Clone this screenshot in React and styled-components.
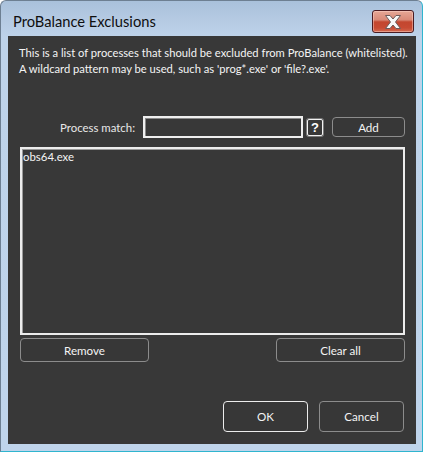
import React from "react";
import styled, { createGlobalStyle } from "styled-components";

const Global = createGlobalStyle`
  html, body { margin: 0; padding: 0; background: #ffffff; }
  body { font-family: Lato, "Noto Sans", sans-serif; }
  * { box-sizing: border-box; }
`;

const Window = styled.div`
  width: 423px;
  height: 452px;
  display: flex;
  flex-direction: column;
  border-style: solid;
  border-width: 1px;
  border-color: #6d7f92 #2fb5cf #2fb5cf #6d7f92;
  border-radius: 6px 6px 0 0;
  background: linear-gradient(180deg, #a9c1db 0px, #b6cbe3 20px, #bed3ea 36px, #bfd4eb 100%);
  overflow: hidden;
`;

const TitleBar = styled.div`
  height: 35px;
  display: flex;
  align-items: flex-start;
  justify-content: space-between;
  padding: 8px 8px 0 12px;
`;

const Title = styled.div`
  font-family: Lato, sans-serif;
  font-size: 14.7px;
  line-height: 24px;
  color: #0f0f0f;
`;

const CloseButton = styled.div`
  width: 42px;
  height: 23px;
  margin-top: 1px;
  border: 1px solid #4a1c22;
  border-radius: 3px;
  background: linear-gradient(180deg, #e6a796 0%, #d98a78 42%, #c3462f 52%, #c74a33 80%, #d46a50 100%);
  box-shadow: inset 0 0 0 1px rgba(255, 220, 210, 0.45);
  display: flex;
  align-items: center;
  justify-content: center;
`;

const Panel = styled.div`
  margin: 0 6px 6px 7px;
  height: 408px;
  background: #383838;
  display: flex;
  flex-direction: column;
  padding: 0 11px 0 12px;
  color: #f2f2f2;
  font-family: Lato, sans-serif;
  font-size: 11.4px;
`;

const Description = styled.p`
  margin: 9px 0 0 -1px;
  line-height: 16px;
  font-size: 11.2px;
  color: #f4f4f4;
  white-space: nowrap;
`;

const MatchRow = styled.div`
  margin-top: 39px;
  height: 22px;
  display: flex;
  align-items: center;
`;

const Label = styled.label`
  flex: 1;
  text-align: right;
  margin-right: 8px;
  color: #e8e8e8;
`;

const TextInput = styled.div`
  width: 160px;
  height: 22px;
  border: 2px solid #efefef;
  box-shadow: inset 1px 1px 0 #8a8a8a;
  background: #383838;
`;

const HelpButton = styled.div`
  width: 16px;
  height: 17px;
  margin-left: 4px;
  border: 1px solid #f2f2f2;
  border-radius: 2px;
  box-shadow: 0 0 0 1px #7a7a7a;
  display: flex;
  align-items: center;
  justify-content: center;
  font-family: "Liberation Sans", Arial, sans-serif;
  font-weight: 700;
  font-size: 13px;
  color: #ffffff;
`;

const Button = styled.div`
  width: ${(p) => p.$w}px;
  height: ${(p) => p.$h}px;
  margin-left: ${(p) => p.$ml || 0}px;
  border: 1px solid ${(p) => (p.$default ? "#ececec" : "#8c8c8c")};
  border-radius: 4px;
  background: #373737;
  display: flex;
  align-items: center;
  justify-content: center;
  color: #f4f4f4;
  font-size: 11.6px;
`;

const List = styled.div`
  margin-top: 9px;
  height: 188px;
  border: 2px solid #ececec;
  box-shadow: inset 1px 1px 0 #9a9a9a;
  padding: 1px 1px;
  line-height: 14px;
  color: #f4f4f4;
`;

const ButtonRow = styled.div`
  margin-top: 3px;
  height: 24px;
  display: flex;
  justify-content: space-between;
`;

const DialogButtons = styled.div`
  margin-top: 39px;
  display: flex;
  justify-content: flex-end;
  padding-right: 1px;
`;

export default function App() {
  return (
    <>
      <Global />
      <Window>
        <TitleBar>
          <Title>ProBalance Exclusions</Title>
          <CloseButton>
            <svg width="22" height="16" viewBox="0 0 22 16">
              <path
                d="M3.5 1.5 L8 1.5 L11 5 L14 1.5 L18.5 1.5 L13.5 8 L18.5 14.5 L14 14.5 L11 11 L8 14.5 L3.5 14.5 L8.5 8 Z"
                fill="#f8f8f8"
                stroke="#6b5a5a"
                strokeWidth="1"
                strokeLinejoin="round"
              />
            </svg>
          </CloseButton>
        </TitleBar>
        <Panel>
          <Description>
            This is a list of processes that should be excluded from ProBalance (whitelisted).
            <br />
            A wildcard pattern may be used, such as 'prog*.exe' or 'file?.exe'.
          </Description>
          <MatchRow>
            <Label>Process match:</Label>
            <TextInput />
            <HelpButton>?</HelpButton>
            <Button $w={73} $h={20} $ml={9}>Add</Button>
          </MatchRow>
          <List>obs64.exe</List>
          <ButtonRow>
            <Button $w={129} $h={24}>Remove</Button>
            <Button $w={129} $h={24}>Clear all</Button>
          </ButtonRow>
          <DialogButtons>
            <Button $w={85} $h={31} $default>OK</Button>
            <Button $w={85} $h={31} $ml={11}>Cancel</Button>
          </DialogButtons>
        </Panel>
      </Window>
    </>
  );
}
